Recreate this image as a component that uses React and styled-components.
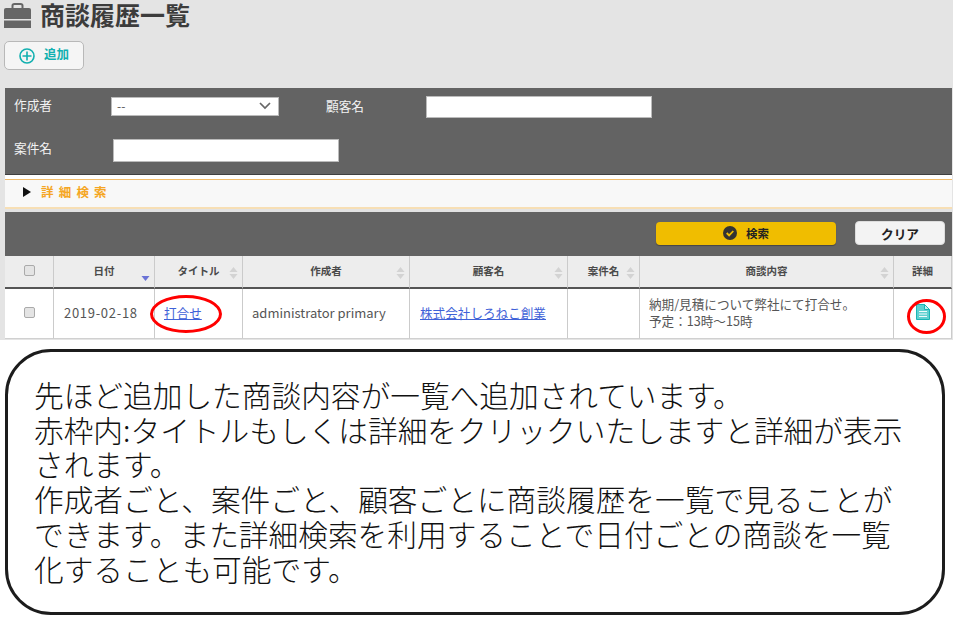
import React from "react";
import styled, { createGlobalStyle } from "styled-components";

const Global = createGlobalStyle`
  html, body { margin: 0; padding: 0; background: #fff; }
  body { font-family: "Noto Sans CJK JP", "Noto Sans", sans-serif; color: #333; }
  * { box-sizing: border-box; }
`;
const Page = styled.div`width: 953px; height: 634px; overflow: hidden; background: #fff;`;
const Top = styled.div`height: 340px; background: #e4e4e4; padding: 0 1px 0 5px; position: relative;`;
const TitleBar = styled.div`height: 41px; display: flex; align-items: center; margin-left: -1px; padding-bottom: 14px; gap: 9px;`;
const Title = styled.h1`margin: 0; font-size: 25px; line-height: 30px; font-weight: 700; color: #3c3c3c;`;
const Tools = styled.div`height: 47px;`;
const AddButton = styled.button`
  width: 80px; height: 29px; display: flex; align-items: center; padding: 0 0 0 14px; gap: 9px;
  background: #f5f5f5; border: 1px solid #b8b8b8; border-radius: 5px; margin-left: -1px;
  font: 700 12.5px "Noto Sans CJK JP", sans-serif; color: #12b0b0;
  span { position: relative; top: -2px; }
`;
const Filter = styled.div`height: 87px; background: #636363; border-bottom: 1px solid #3f3f3f; position: relative; padding-top: 9px;`;
const FilterRow = styled.div`display: flex; align-items: center; height: ${p => p.$h}px; margin-top: ${p => p.$mt || 0}px;`;
const FilterLabel = styled.label`
  width: ${p => p.$w}px; padding-left: ${p => p.$pl || 0}px; color: #f2f2f2; font-size: 12.7px; line-height: 16px;
  position: relative; top: ${p => p.$up || 0}px;
`;
const FakeSelect = styled.div`
  width: 168px; height: 19px; background: #fff; border: 1px solid #bbb; display: flex; align-items: center;
  justify-content: space-between; padding: 0 7px 0 5px; color: #555; font-size: 12px; line-height: 14px;
  margin-top: -2px;
`;
const Input = styled.input`
  width: ${p => p.$w}px; height: ${p => p.$h}px; background: #fff; border: 1px solid #bbb; padding: 0;
  margin-left: ${p => p.$ml || 0}px; display: block;
`;
const Gap = styled.div`height: 4px; background: #fff;`;
const Accordion = styled.div`
  height: 30px; background: #f8f8f8; border-top: 1px solid #f0bb6a; border-bottom: 2px solid #f7dfb5;
  display: flex; align-items: center; padding: 0 0 3px 18px; gap: 10px;
`;
const Arrow = styled.span`width: 0; height: 0; border-left: 8px solid #111; border-top: 5px solid transparent; border-bottom: 5px solid transparent;`;
const AccordionText = styled.span`font-size: 12.5px; font-weight: 700; color: #f5a623; letter-spacing: 5.2px; line-height: 14px;`;
const ActionBar = styled.div`
  height: 47px; background: #636363; border-top: 3px solid #e2e2e2; display: flex; align-items: center; justify-content: flex-end;
  padding: 0 7px 2px 0; gap: 19px;
`;
const SearchButton = styled.button`
  width: 180px; height: 23px; background: #f0bd00; border: 0; border-radius: 4px; display: flex; align-items: center; justify-content: center; gap: 9px;
  font: 700 11.5px "Noto Sans CJK JP", sans-serif; color: #222; box-shadow: 0 1px 1px rgba(0,0,0,.3); padding: 0;
`;
const ClearButton = styled.button`
  width: 90px; height: 24px; background: #f3f3f3; border: 1px solid #ddd; border-radius: 4px;
  font: 700 12.7px "Noto Sans CJK JP", sans-serif; color: #222; padding: 0;
`;
const Table = styled.div`display: grid; grid-template-columns: 49px 101px 88px 167px 158px 72px 254px 58px;`;
const Head = styled.div`
  height: 33px; background: #ededed; border-right: 1px solid #cbcbcb; border-bottom: 2px solid #555; position: relative;
  display: flex; align-items: center; justify-content: center; font-size: 10.5px; font-weight: 700; color: #4a4a4a; padding-bottom: 2px;
`;
const Sort = styled.svg`position: absolute; right: 4px; top: ${p => p.$top || 12}px;`;
const Cell = styled.div`
  height: 50px; background: #fff; border-right: 1px solid #cbcbcb; border-bottom: 1px solid #d0d0d0; display: flex; align-items: center;
  justify-content: ${p => p.$center ? "center" : "flex-start"}; padding: 0 0 3px ${p => p.$pl || 0}px; font-size: 13px; color: #555; position: relative;
`;
const DateText = styled.span`letter-spacing: 0.7px;`;
const Box = styled.span`width: 11px; height: 11px; border: 1px solid #aaa; border-radius: 2px; background: #e4e4e4; display: block;`;
const NoteLink = styled.a`color: #3f62d8; text-decoration: underline; font-size: 12.6px;`;
const Note = styled.div`font-size: 12.6px; line-height: 17px; color: #555;`;
const Ring = styled.span`
  position: absolute; border: 3px solid #f00; border-radius: 50%;
  left: ${p => p.$l}px; top: ${p => p.$t}px; width: ${p => p.$w}px; height: ${p => p.$h}px;
`;
const Bottom = styled.div`padding: 9px 8px 0 5px;`;
const Callout = styled.div`
  height: 266px; border: 3px solid #1c1c1c; border-radius: 46px; background: #fff; padding: 26px 0 0 26px;
  font-size: 29.7px; line-height: 34.7px; color: #111; white-space: nowrap; font-weight: 300;
`;

const Updown = ({ on }) => (
  <Sort width="9" height="13" viewBox="0 0 9 13" $top={on ? 13 : 11}>
    {!on && <path d="M4.5 0L8.5 5H.5z" fill="#d3d3d3" />}
    <path d="M.5 7h8l-4 5z" fill={on ? "#6b73d6" : "#d3d3d3"} />
  </Sort>
);
const heads = ["", "日付", "タイトル", "作成者", "顧客名", "案件名", "商談内容", "詳細"];

export default function App() {
  return (
    <Page>
      <Global />
      <Top>
        <TitleBar>
          <svg width="27" height="25" viewBox="0 0 27 25" style={{ marginTop: 3 }}>
            <path d="M8.5 6V2.500C8.500 1.500 9.500 1 10.500 1h6c1 0 2 .5 2 1.500V6" fill="none" stroke="#666" strokeWidth="2" />
            <path d="M0 6.500Q0 5 2 5h23q2 0 2 1.500V16H0z" fill="#666" />
            <path d="M0 17.500h27V25H0z" fill="#666" />
          </svg>
          <Title>商談履歴一覧</Title>
        </TitleBar>
        <Tools>
          <AddButton>
            <svg width="16" height="16" viewBox="0 0 16 16" fill="none" stroke="#12b0b0" strokeWidth="1.600">
              <circle cx="8" cy="8" r="7" /><path d="M8 3.500v9M3.500 8h9" />
            </svg>
            <span>追加</span>
          </AddButton>
        </Tools>
        <Filter>
          <FilterRow $h={20}>
            <FilterLabel $w={106} $pl={9} $up={-2}>作成者</FilterLabel>
            <FakeSelect>
              --
              <svg width="12" height="8" viewBox="0 0 12 8" fill="none" stroke="#666" strokeWidth="1.700"><path d="M1 1l5 5 5-5" /></svg>
            </FakeSelect>
            <FilterLabel $w={147} $pl={47} $up={-1}>顧客名</FilterLabel>
            <Input $w={226} $h={22} />
          </FilterRow>
          <FilterRow $h={23} $mt={22}>
            <FilterLabel $w={108} $pl={9} $up={-3}>案件名</FilterLabel>
            <Input $w={226} $h={23} />
          </FilterRow>
        </Filter>
        <Gap />
        <Accordion><Arrow /><AccordionText>詳細検索</AccordionText></Accordion>
        <ActionBar>
          <SearchButton>
            <svg width="14" height="14" viewBox="0 0 14 14"><circle cx="7" cy="7" r="7" fill="#333" /><path d="M3.700 7l2.400 2.400 4.200-4.400" fill="none" stroke="#f0bd00" strokeWidth="1.800" /></svg>
            検索
          </SearchButton>
          <ClearButton>クリア</ClearButton>
        </ActionBar>
        <Table>
          {heads.map((h, i) => (
            <Head key={i}>
              {i === 0 ? <Box /> : h}
              {i > 0 && i < 7 && <Updown on={i === 1} />}
            </Head>
          ))}
          <Cell $center><Box /></Cell>
          <Cell $pl={10}><DateText>2019-02-18</DateText></Cell>
          <Cell $pl={9}><NoteLink href="#">打合せ</NoteLink></Cell>
          <Cell $pl={9}>administrator primary</Cell>
          <Cell $pl={10}><NoteLink href="#">株式会社しろねこ創業</NoteLink></Cell>
          <Cell />
          <Cell $pl={9}><Note>納期/見積について弊社にて打合せ。<br />予定：13時～15時</Note></Cell>
          <Cell $center>
            <svg width="14" height="16" viewBox="0 0 14 16">
              <path d="M.5.500h8l5 5v10H.5z" fill="#5fd0d0" stroke="#1ab5b5" />
              <path d="M8.500.500l5 5h-5z" fill="#c8efef" stroke="#1ab5b5" />
              <path d="M3 7.500h8M3 10h8M3 12.500h8" stroke="#f0fbfb" strokeWidth="1.200" />
            </svg>
          </Cell>
        </Table>
        <Ring $l={150} $t={295} $w={72} $h={38} />
        <Ring $l={907} $t={299} $w={39} $h={35} />
      </Top>
      <Bottom>
        <Callout>
          先ほど追加した商談内容が一覧へ追加されています。<br />
          赤枠内:タイトルもしくは詳細をクリックいたしますと詳細が表示<br />
          されます。<br />
          作成者ごと、案件ごと、顧客ごとに商談履歴を一覧で見ることが<br />
          できます。また詳細検索を利用することで日付ごとの商談を一覧<br />
          化することも可能です。
        </Callout>
      </Bottom>
    </Page>
  );
}
